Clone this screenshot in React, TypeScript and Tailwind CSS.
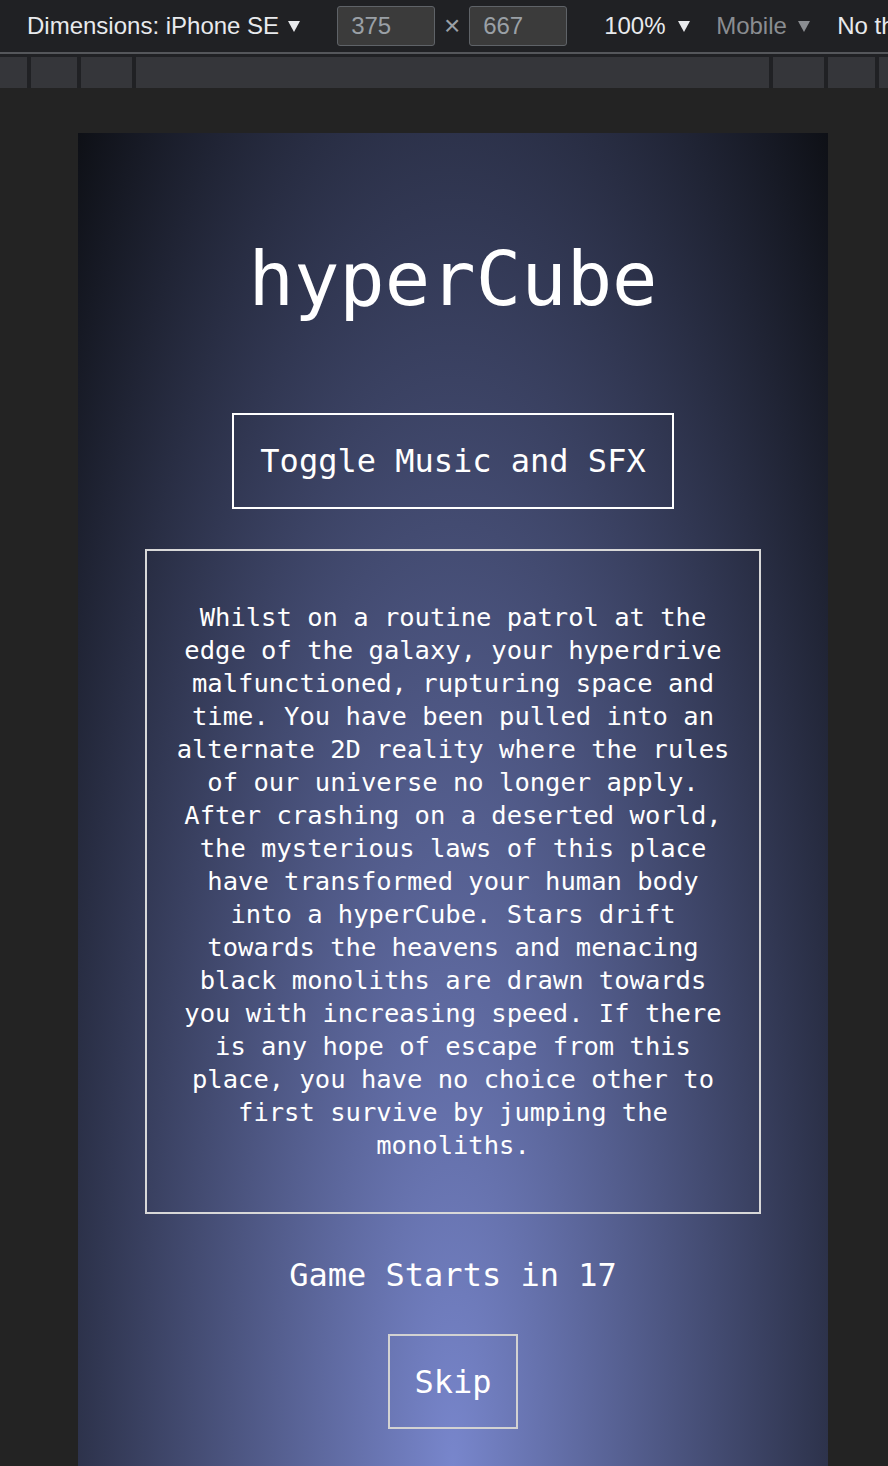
import React from "react";

const lines = [
  "Whilst on a routine patrol at the",
  "edge of the galaxy, your hyperdrive",
  "malfunctioned, rupturing space and",
  "time. You have been pulled into an",
  "alternate 2D reality where the rules",
  "of our universe no longer apply.",
  "After crashing on a deserted world,",
  "the mysterious laws of this place",
  "have transformed your human body",
  "into a hyperCube. Stars drift",
  "towards the heavens and menacing",
  "black monoliths are drawn towards",
  "you with increasing speed. If there",
  "is any hope of escape from this",
  "place, you have no choice other to",
  "first survive by jumping the",
  "monoliths.",
];

const Caret: React.FC<{ color: string }> = ({ color }) => (
  <svg width="12" height="11" viewBox="0 0 12 11" className="shrink-0">
    <polygon points="0,0 12,0 6,11" fill={color} />
  </svg>
);

const Toolbar: React.FC = () => {
  return (
    <div className="flex h-[52px] items-center overflow-hidden whitespace-nowrap bg-[#202124] pl-[27px] font-['Liberation_Sans',Arial,sans-serif] text-[24px] text-[#e8eaed]">
      <span className="shrink-0">Dimensions: iPhone SE</span>
      <span className="ml-[9px]">
        <Caret color="#e8eaed" />
      </span>
      <div className="ml-[37px] flex h-[40px] w-[98px] shrink-0 items-center rounded-[3px] border border-[#5f6368] bg-[#3b3b3b] pl-[13px] text-[#9aa0a6]">
        375
      </div>
      <span className="w-[34px] shrink-0 text-center text-[28px] text-[#9aa0a6]">×</span>
      <div className="flex h-[40px] w-[98px] shrink-0 items-center rounded-[3px] border border-[#5f6368] bg-[#3b3b3b] pl-[13px] text-[#9aa0a6]">
        667
      </div>
      <span className="ml-[37px] w-[63px] shrink-0">100%</span>
      <span className="ml-[11px]">
        <Caret color="#e8eaed" />
      </span>
      <span className="ml-[26px] w-[72px] shrink-0 text-[#8a8d91]">Mobile</span>
      <span className="ml-[10px]">
        <Caret color="#8a8d91" />
      </span>
      <span className="ml-[27px] shrink-0">No throttling</span>
    </div>
  );
};

const Ruler: React.FC = () => {
  const widths = ["w-[27px]", "w-[46px]", "w-[51px]", "w-[633px]", "w-[51px]", "w-[47px]", "w-[9px]"];
  return (
    <div className="flex h-[31px] gap-[4px] bg-[#202124]">
      {widths.map((w, i) => (
        <div key={i} className={`${w} shrink-0 bg-[#35363a]`} />
      ))}
    </div>
  );
};

export default function App() {
  return (
    <div className="h-[1466px] w-[888px] overflow-hidden bg-[#232323]">
      <Toolbar />
      <div className="h-[2px] bg-[#55575b]" />
      <div className="h-[3px] bg-[#202124]" />
      <Ruler />
      <div className="flex pl-[78px] pt-[45px]">
        {/* device frame, 375x667 shown at 2x */}
        <div className="flex h-[1334px] w-[750px] shrink-0 flex-col items-center bg-[radial-gradient(ellipse_at_bottom,#7886cc_0%,#0e1016_100%)] font-['DejaVu_Sans_Mono','Liberation_Mono',monospace] text-white">
          <h1 className="mt-[108px] text-[75.5px] leading-[76px]">hyperCube</h1>

          <button className="mt-[96px] border-2 border-white px-[26px] py-[26px] text-[32px] leading-[40px]">
            Toggle Music and SFX
          </button>

          <div className="mt-[40px] w-[616px] border-2 border-[#d8d8d8] py-[50px] text-center text-[25.5px] leading-[33px]">
            {lines.map((l, i) => (
              <span key={i} className="block whitespace-pre">
                {l}
              </span>
            ))}
          </div>

          <p className="mt-[41px] text-[32px] leading-[40px]">Game Starts in 17</p>

          <button className="mt-[39px] flex h-[95px] w-[130px] items-center justify-center border-2 border-[#d2d2d2] text-[32px] leading-[40px]">
            Skip
          </button>
        </div>
      </div>
    </div>
  );
}
